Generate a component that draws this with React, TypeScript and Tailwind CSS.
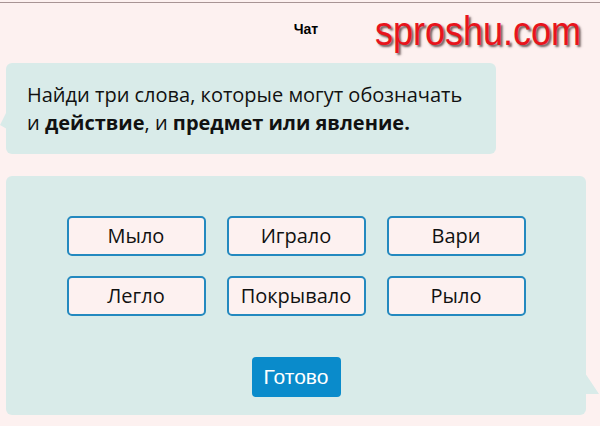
import React from "react";

const words = ["Мыло", "Играло", "Вари", "Легло", "Покрывало", "Рыло"];

export default function App() {
  return (
    <div className="relative w-[600px] h-[426px] overflow-hidden bg-[#fdf1f0]" style={{ fontFamily: '"Open Sans", sans-serif' }}>
      <div className="mt-[2px] border-t border-[#a89494]" />
      <div className="h-[60px] flex items-start justify-center pt-[16px] pl-[12px]">
        <span className="text-[14px] font-bold text-black" style={{ fontFamily: '"Liberation Sans", Arial, sans-serif' }}>Чат</span>
      </div>
      <div
        className="absolute left-[375px] top-[0px] text-[36px] text-[#e8141c] origin-top scale-y-[1.15] [text-shadow:2px_2px_2px_rgba(60,40,40,0.75)]"
        style={{ fontFamily: '"Liberation Sans", Arial, sans-serif' }}
      >
        sproshu.com
      </div>

      <div className="relative ml-[6px] w-[490px] rounded-[6px] bg-[#d9ebe9] px-[21px] pt-[18px] pb-[17px] text-[20px] leading-[28px] text-[#111]">
        <svg className="absolute -left-[6px] top-[48px]" width="7" height="20" viewBox="0 0 7 20">
          <polygon points="7,0 0,14 7,18" fill="#d9ebe9" />
        </svg>
        <div>Найди три слова, которые могут обозначать</div>
        <div>
          и <b>действие</b>, и <b>предмет или явление.</b>
        </div>
      </div>

      <div className="relative ml-[6px] mt-[22px] w-[580px] h-[239px] rounded-[6px] bg-[#d9ebe9] flex flex-col items-center pt-[40px]">
        <svg className="absolute -right-[14px] top-[197px]" width="15" height="24" viewBox="0 0 15 24">
          <polygon points="0,0 14,21 0,21" fill="#d9ebe9" />
        </svg>
        <div className="grid grid-cols-[139px_139px_139px] gap-x-[21px] gap-y-[20px]">
          {words.map((w) => (
            <div
              key={w}
              className="h-[40px] rounded-[5px] border-2 border-[#2489bf] bg-[#fdf1f0] flex items-center justify-center text-[20px] text-[#111]"
            >
              {w}
            </div>
          ))}
        </div>
        <div
          className="mt-[41px] h-[40px] w-[89px] rounded-[4px] bg-[#0a8bcb] flex items-center justify-center text-white text-[21px]"
          style={{ fontFamily: '"Liberation Sans", Arial, sans-serif' }}
        >
          Готово
        </div>
      </div>
    </div>
  );
}
